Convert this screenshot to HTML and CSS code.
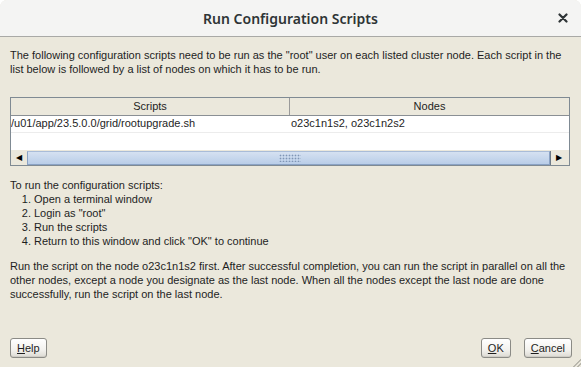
FILE: index.html
```html
<!DOCTYPE html>
<html lang="en">
<head>
  <meta charset="UTF-8">
  <title>Run Configuration Scripts</title>
  <link rel="stylesheet" href="styles.css">
</head>
<body>
  <div class="dialog">
    <!-- Title Bar -->
    <div class="titlebar">
      <span class="title">Run Configuration Scripts</span>
      <svg class="close" width="10" height="10" viewBox="0 0 10 10">
        <path d="M1.5 1.5 L8.5 8.5 M8.5 1.5 L1.5 8.5" stroke="#2e3436" stroke-width="2.2" stroke-linecap="round"/>
      </svg>
    </div>

    <div class="content">
      <p class="intro">The following configuration scripts need to be run as the "root" user on each listed cluster node. Each script in the list below is followed by a list of nodes on which it has to be run.</p>

      <!-- Scripts Table -->
      <div class="table">
        <div class="row head">
          <div class="cell col-script">Scripts</div>
          <div class="cell col-nodes">Nodes</div>
        </div>
        <div class="row">
          <div class="cell col-script">/u01/app/23.5.0.0/grid/rootupgrade.sh</div>
          <div class="cell col-nodes">o23c1n1s2, o23c1n2s2</div>
        </div>
        <div class="row empty">
          <div class="cell col-script"></div>
          <div class="cell col-nodes"></div>
        </div>
        <div class="hscroll">
          <div class="arrow">&#9664;</div>
          <div class="thumb"><span class="grip"></span></div>
          <div class="arrow">&#9654;</div>
        </div>
      </div>

      <div class="steps">
        <p>To run the configuration scripts:</p>
        <ol>
          <li>Open a terminal window</li>
          <li>Login as "root"</li>
          <li>Run the scripts</li>
          <li>Return to this window and click "OK" to continue</li>
        </ol>
      </div>

      <p class="note">Run the script on the node o23c1n1s2 first. After successful completion, you can run the script in parallel on all the other nodes, except a node you designate as the last node. When all the nodes except the last node are done successfully, run the script on the last node.</p>
    </div>

    <!-- Buttons -->
    <div class="footer">
      <button class="btn"><u>H</u>elp</button>
      <div class="btn-group">
        <button class="btn"><u>O</u>K</button>
        <button class="btn"><u>C</u>ancel</button>
      </div>
    </div>
    <div class="grip-corner"></div>
  </div>
</body>
</html>
```

FILE: styles.css
```css
/* General Reset */
* {
  margin: 0;
  padding: 0;
  box-sizing: border-box;
}

body {
  background-color: #ffffff;
  font-family: 'Liberation Sans', Arial, sans-serif;
  font-size: 11px;
  color: #1e1e1e;
}

/* Dialog Window */
.dialog {
  width: 581px;
  height: 367px;
  background-color: #ebe8dc;
  border-radius: 7px 7px 0 0;
  display: flex;
  flex-direction: column;
  position: relative;
  overflow: hidden;
}

.titlebar {
  height: 37px;
  background-color: #f4f4f3;
  border-bottom: 1px solid #a9a9a6;
  display: flex;
  align-items: center;
  justify-content: center;
  position: relative;
  flex-shrink: 0;
}

.title {
  font-family: 'Noto Sans', sans-serif;
  font-weight: 600;
  font-size: 14px;
  color: #2e3436;
}

.close {
  position: absolute;
  right: 13px;
  top: 13px;
}

/* Main Content */
.content {
  padding: 11px 10px 0 10px;
  line-height: 14px;
}

.intro {
  padding-right: 8px;
}

/* Table */
.table {
  margin-top: 21px;
  width: 560px;
  border: 1px solid #7f8a93;
  background-color: #ffffff;
}

.row {
  display: flex;
  height: 16px;
}

.row.head {
  height: 18px;
  background-color: #ebe8dc;
  border-bottom: 1px solid #8a8f94;
}

.row.head .cell {
  text-align: center;
  line-height: 17px;
}

.row.empty {
  height: 18px;
  border-top: 1px solid #ececec;
}

.cell {
  white-space: nowrap;
  overflow: hidden;
  line-height: 14px;
}

.col-script {
  width: 279px;
  border-right: 1px solid #9a9a9a;
}

.row:not(.head) .col-script {
  border-right: 1px solid #ffffff;
}

.col-nodes {
  flex: 1;
  padding-left: 1px;
}

.row.head .col-nodes {
  padding-left: 0;
}

/* Horizontal Scrollbar */
.hscroll {
  display: flex;
  height: 15px;
  background-color: #ebe8dc;
  border-top: 1px solid #ebe8dc;
}

.arrow {
  width: 16px;
  font-size: 8px;
  line-height: 14px;
  text-align: center;
  color: #000000;
}

.hscroll .arrow:last-child {
  border-left: 1px solid #6d7a88;
  margin-right: 3px;
}

.thumb {
  flex: 1;
  border: 1px solid #8aa2c4;
  border-top-color: #a9bcd8;
  background: linear-gradient(#d5e1f1, #b9cde8);
  display: flex;
  align-items: center;
  justify-content: center;
}

.grip {
  width: 22px;
  height: 8px;
  background-image: radial-gradient(#7f95b5 40%, transparent 50%);
  background-size: 3px 3px;
  margin-left: 2px;
}

/* Steps */
.steps {
  margin-top: 12px;
}

.steps ol {
  padding-left: 24px;
}

.note {
  margin-top: 11px;
  padding-right: 4px;
}

/* Footer Buttons */
.footer {
  margin-top: auto;
  padding: 0 9px 9px 10px;
  display: flex;
  justify-content: space-between;
  align-items: flex-end;
}

.btn-group {
  display: flex;
  gap: 13px;
}

.btn {
  font-family: 'Liberation Sans', Arial, sans-serif;
  font-size: 11px;
  color: #1e1e1e;
  height: 20px;
  padding: 0 6px;
  border: 1px solid #8b8b86;
  border-radius: 3px;
  background: linear-gradient(#ffffff, #f3f2ee 60%, #dcdad3);
  box-shadow: inset 0 -1px 0 #cfcdc6;
}

.grip-corner {
  position: absolute;
  right: 0;
  bottom: 0;
  width: 8px;
  height: 8px;
  background: linear-gradient(135deg, transparent 50%, #b9b7ad 50%, #b9b7ad 60%, transparent 60%, transparent 75%, #b9b7ad 75%, #b9b7ad 85%, transparent 85%);
}
```
